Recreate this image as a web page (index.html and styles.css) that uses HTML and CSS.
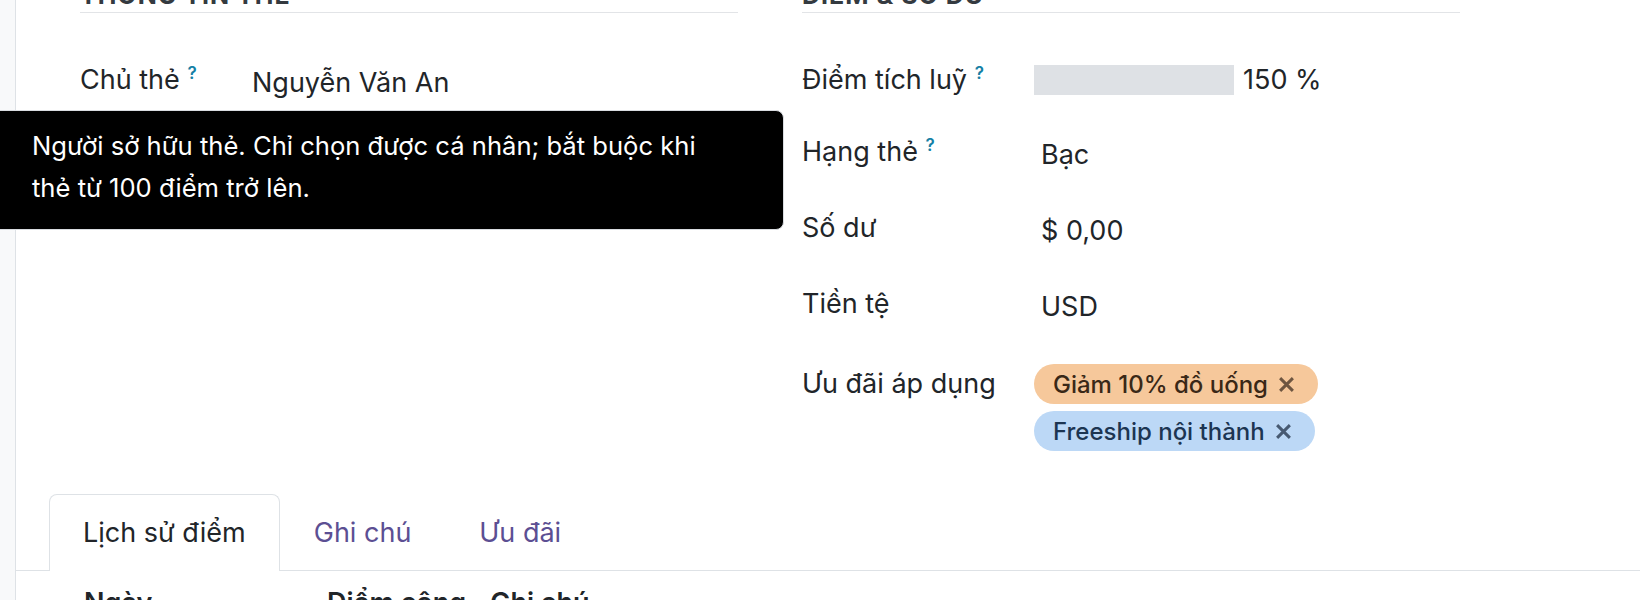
FILE: index.html
```html
<!DOCTYPE html>
<html lang="vi">
<head>
  <meta charset="UTF-8">
  <title>Thẻ thành viên - Nguyễn Văn An</title>
  <link rel="stylesheet" href="styles.css">
</head>
<body>
  <div class="app">
    <aside class="gutter"></aside>

    <main class="sheet">
      <div class="groups">
        <section class="group group-card">
          <h2 class="group-title">Thông tin thẻ</h2>

          <div class="field has-tip">
            <label class="field-label">Chủ thẻ <sup class="help">?</sup></label>
            <span class="field-value text">Nguyễn Văn An</span>

            <div class="tooltip">
              Người sở hữu thẻ. Chỉ chọn được cá nhân; bắt buộc khi<br>
              thẻ từ 100 điểm trở lên.
            </div>
          </div>
        </section>

        <section class="group group-points">
          <h2 class="group-title">Điểm &amp; số dư</h2>

          <div class="field field-progress">
            <label class="field-label">Điểm tích luỹ <sup class="help">?</sup></label>
            <span class="field-value progress">
              <span class="progress-bar"></span>
              <span class="progress-text">150 %</span>
            </span>
          </div>

          <div class="field">
            <label class="field-label">Hạng thẻ <sup class="help">?</sup></label>
            <span class="field-value text">Bạc</span>
          </div>

          <div class="field">
            <label class="field-label">Số dư</label>
            <span class="field-value text">$ 0,00</span>
          </div>

          <div class="field field-currency">
            <label class="field-label">Tiền tệ</label>
            <span class="field-value text">USD</span>
          </div>

          <div class="field">
            <label class="field-label">Ưu đãi áp dụng</label>
            <span class="field-value tags">
              <span class="tag tag-orange">Giảm 10% đồ uống
                <svg class="tag-x" viewBox="0 0 16 16"><path d="M2 2 L14 14 M14 2 L2 14"/></svg>
              </span>
              <span class="tag tag-blue">Freeship nội thành
                <svg class="tag-x" viewBox="0 0 16 16"><path d="M2 2 L14 14 M14 2 L2 14"/></svg>
              </span>
            </span>
          </div>
        </section>
      </div>

      <div class="notebook">
        <ul class="tabs">
          <li class="tab active">Lịch sử điểm</li>
          <li class="tab">Ghi chú</li>
          <li class="tab">Ưu đãi</li>
        </ul>

        <div class="tab-pane">
          <div class="list-head">
            <span class="col-date">Ngày</span>
            <span class="col-points">Điểm cộng</span>
            <span class="col-note">Ghi chú</span>
          </div>
        </div>
      </div>
    </main>
  </div>
</body>
</html>
```

FILE: styles.css
```css
* {
  margin: 0;
  padding: 0;
  box-sizing: border-box;
}

body {
  font-family: "Inter", "Noto Sans", sans-serif;
  font-size: 27px;
  color: #212529;
  background: #ffffff;
  overflow: hidden;
}

.app {
  display: flex;
  min-height: 100vh;
}

/* thin grey strip on the left of the form */
.gutter {
  width: 16px;
  flex-shrink: 0;
  background: #f8f9fa;
  border-right: 1px solid #dee2e6;
}

.sheet {
  flex: 1;
  min-width: 0;
}

/* two field groups side by side (page is scrolled a little) */
.groups {
  display: grid;
  grid-template-columns: 658px 658px;
  column-gap: 64px;
  padding-left: 64px;
  margin-top: -20px;
  height: 514px;
}

.group-title {
  font-size: 25px;
  font-weight: 700;
  line-height: 30px;
  text-transform: uppercase;
  letter-spacing: 1px;
  color: #343a40;
  padding-bottom: 2px;
  border-bottom: 1px solid #e2e4e7;
  margin-bottom: 51px;
}

.field {
  display: grid;
  align-items: start;
  min-height: 76px;
}

.field-progress {
  min-height: 72px;
}

.field-currency {
  min-height: 80px;
}

.group-card .field {
  grid-template-columns: 165px 1fr;
}

.group-points .field {
  grid-template-columns: 232px 1fr;
}

.field-label {
  line-height: 32px;
  white-space: nowrap;
}

.help {
  position: relative;
  top: -10px;
  font-size: 17px;
  font-weight: 600;
  color: #1580a5;
  vertical-align: baseline;
}

.field-value.text {
  line-height: 32px;
  padding-top: 3px;
  padding-left: 7px;
}

/* tooltip hovering under the owner field */
.has-tip {
  position: relative;
}

.tooltip {
  position: absolute;
  top: 46px;
  left: -90px;
  width: 794px;
  padding: 14px 30px 20px 41px;
  background: #000000;
  color: #ffffff;
  font-size: 25.6px;
  line-height: 42px;
  border: 1px solid #d9dce0;
  border-radius: 8px;
  z-index: 10;
}

.progress {
  display: flex;
  align-items: center;
  gap: 9px;
  height: 32px;
}

.progress-bar {
  display: block;
  width: 200px;
  height: 30px;
  background: #dee1e5;
}

.progress-text {
  line-height: 32px;
}

.tags {
  display: flex;
  flex-direction: column;
  align-items: flex-start;
  gap: 7px;
  margin-top: -4px;
}

.tag {
  display: inline-flex;
  align-items: center;
  height: 40px;
  padding: 0 23px 0 19px;
  border-radius: 20px;
  font-size: 24px;
  font-weight: 500;
}

.tag-x {
  width: 17px;
  height: 17px;
  margin-left: 10px;
  fill: none;
  stroke: currentColor;
  stroke-width: 2.8;
}

.tag-orange {
  background: #f6c89b;
  color: #3a2817;
}

.tag-orange .tag-x {
  color: #6e5540;
}

.tag-blue {
  background: #bcd8f6;
  color: #1c3552;
}

.tag-blue .tag-x {
  color: #475a72;
}

/* notebook tabs */
.tabs {
  list-style: none;
  display: flex;
  padding-left: 33px;
  border-bottom: 1px solid #dee2e6;
}

.tab {
  padding: 0 33px;
  height: 76px;
  line-height: 76px;
  color: #5c4f93;
  border: 1px solid transparent;
  border-bottom: none;
  margin-bottom: -1px;
}

.tab.active {
  color: #212529;
  background: #ffffff;
  border-color: #dee2e6;
  border-radius: 8px 8px 0 0;
  height: 77px;
}

.list-head {
  display: flex;
  padding: 16px 0 0 68px;
  font-weight: 600;
  line-height: 32px;
  white-space: nowrap;
}

.col-date {
  width: 243px;
}

.col-points {
  margin-right: 24px;
}
```
